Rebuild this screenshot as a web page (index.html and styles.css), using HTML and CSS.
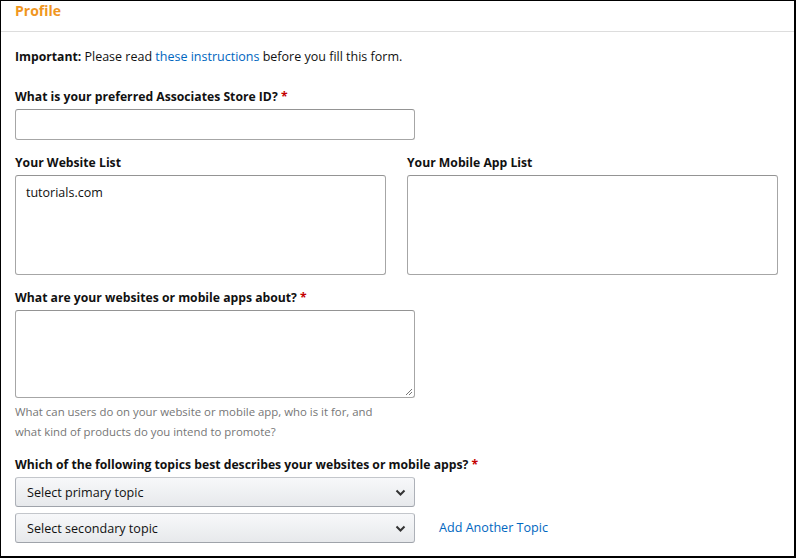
FILE: index.html
```html
<!DOCTYPE html>
<html>
<head>
<meta charset="utf-8">
<link rel="stylesheet" href="styles.css">
</head>
<body>
<div class="frame">
  <div class="header">Profile</div>
  <div class="content">
    <p class="important"><b>Important:</b> Please read <a href="#" class="link">these instructions</a> before you fill this form.</p>

    <div class="field">
      <label class="label">What is your preferred Associates Store ID? <span class="req">*</span></label>
      <div class="input wide"></div>
    </div>

    <div class="lists">
      <div class="field">
        <label class="label">Your Website List</label>
        <div class="textarea list">tutorials.com</div>
      </div>
      <div class="field">
        <label class="label">Your Mobile App List</label>
        <div class="textarea list"></div>
      </div>
    </div>

    <div class="field">
      <label class="label">What are your websites or mobile apps about? <span class="req">*</span></label>
      <div class="textarea about">
        <svg class="grip" width="9" height="9" viewBox="0 0 9 9"><path d="M8 2 L2 8 M8 5 L5 8" stroke="#777" stroke-width="1" fill="none"/></svg>
      </div>
      <p class="help">What can users do on your website or mobile app, who is it for, and<br>what kind of products do you intend to promote?</p>
    </div>

    <div class="field topics">
      <label class="label">Which of the following topics best describes your websites or mobile apps? <span class="req">*</span></label>
      <div class="select-row">
        <div class="select">Select primary topic<svg class="chev" width="11" height="7" viewBox="0 0 11 7"><path d="M1.5 1.5 L5.5 5.5 L9.5 1.5" stroke="#333" stroke-width="2" fill="none"/></svg></div>
      </div>
      <div class="select-row">
        <div class="select">Select secondary topic<svg class="chev" width="11" height="7" viewBox="0 0 11 7"><path d="M1.5 1.5 L5.5 5.5 L9.5 1.5" stroke="#333" stroke-width="2" fill="none"/></svg></div>
        <a href="#" class="link add">Add Another Topic</a>
      </div>
    </div>
  </div>
</div>
</body>
</html>
```

FILE: styles.css
```css
* { box-sizing: border-box; }
html, body { margin: 0; padding: 0; background: #fff; }
body {
  font-family: "Open Sans", "Liberation Sans", sans-serif;
  font-size: 12.5px;
  color: #111;
}
.frame {
  width: 796px;
  height: 558px;
  border-top: 1px solid #000;
  border-left: 1px solid #000;
  border-right: 2px solid #000;
  border-bottom: 2px solid #000;
  overflow: hidden;
}
.header {
  height: 31px;
  padding: 1px 0 0 14px;
  border-bottom: 1px solid #ddd;
  color: #f0961e;
  font-weight: 700;
  font-size: 14px;
  line-height: 18px;
}
.content {
  padding: 15px 0 0 14px;
}
.important {
  margin: 0 0 20px 0;
  line-height: 20px;
}
.important b { font-weight: 700; font-size: 12.2px; }
.link { color: #0066c0; text-decoration: none; }
.field { display: flex; flex-direction: column; }
.label {
  font-weight: 700;
  font-size: 12.2px;
  line-height: 20px;
  margin-bottom: 2px;
}
.req { color: #c40000; }
.input, .textarea {
  border: 1px solid #a6a6a6;
  border-top-color: #949494;
  border-radius: 3px;
  background: #fff;
}
.wide { width: 400px; height: 31px; margin-bottom: 13px; }
.lists {
  display: flex;
  gap: 21px;
  margin-bottom: 13px;
}
.list {
  width: 371px;
  height: 100px;
  padding: 8px 10px;
  line-height: 18px;
}
.about {
  width: 400px;
  height: 88px;
  position: relative;
}
.grip { position: absolute; right: 1px; bottom: 1px; }
.help {
  margin: 4px 0 0 0;
  color: #767676;
  font-size: 11.4px;
  line-height: 20px;
}
.topics { margin-top: 13px; }
.select-row {
  display: flex;
  align-items: center;
  gap: 24px;
  margin-bottom: 6px;
}
.select {
  width: 400px;
  height: 30px;
  border: 1px solid #adb1b8;
  border-top-color: #c3c6cb;
  border-bottom-color: #9fa3aa;
  border-radius: 3px;
  background: linear-gradient(#f7f8fa, #e7e9ec);
  display: flex;
  align-items: center;
  justify-content: space-between;
  padding: 0 8px 0 11px;
  color: #111;
  font-size: 12.6px;
}
.add { line-height: 20px; font-size: 12.6px; }
```
